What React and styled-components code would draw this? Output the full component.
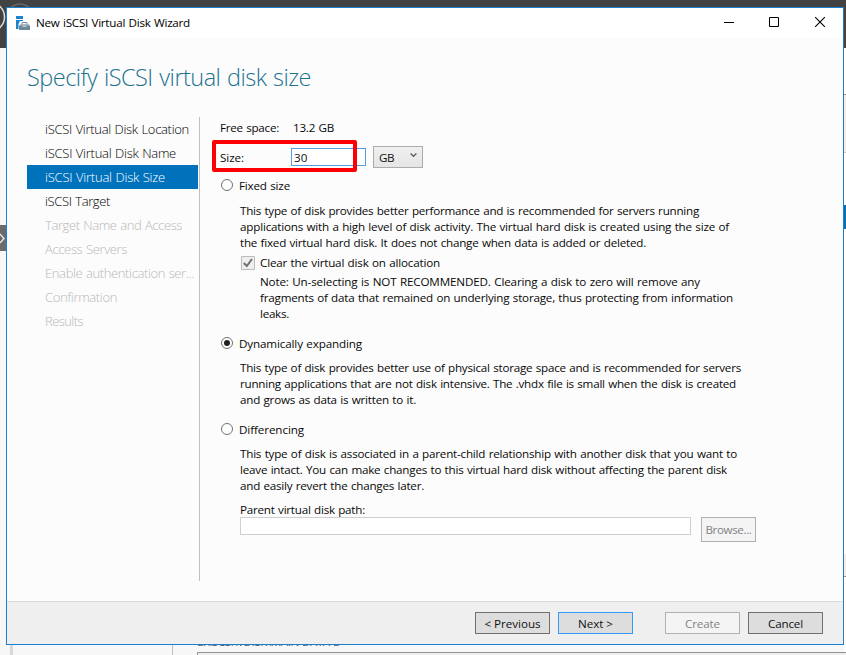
import React, { useLayoutEffect, useRef } from "react";
import styled, { createGlobalStyle, css } from "styled-components";

const GlobalStyle = createGlobalStyle`
  *, *::before, *::after { box-sizing: border-box; }
  html, body { margin: 0; padding: 0; overflow: hidden; }
  button, input { font: inherit; margin: 0; padding: 0; border-radius: 0; outline: 0; }
`;

const Desktop = styled.div`
  position: relative;
  width: 846px;
  height: 655px;
  overflow: hidden;
  background: #f7f7f7;
  font: 11.65px/16px "Open Sans", "Noto Sans", sans-serif;
  word-spacing: 0.6px;
  color: #080808;
`;

const ServerBar = styled.div`
  height: 48px;
  background: #424242;
`;

const Backdrop = styled.svg`
  position: absolute;
  inset: 0;
  display: block;
`;

const HiddenCaption = styled.div`
  position: absolute;
  left: 197px;
  top: 634px;
  color: #4d5c7d;
  white-space: pre;
`;

const Window = styled.section`
  position: absolute;
  left: 6px;
  top: 7px;
  width: 838px;
  height: 638px;
  display: flex;
  flex-direction: column;
  border: 1px solid #1a80cc;
  background: #fcfcfc;
`;

const TitleBar = styled.header`
  display: flex;
  align-items: center;
  height: 30px;
  padding: 0 18px 0 9px;
  background: #fff;
  color: #000;
`;

const AppIcon = styled.svg`
  width: 14px;
  height: 14px;
  margin-right: 6px;
`;

const Controls = styled.div`
  display: flex;
  gap: 35px;
  margin: 0 0 2px auto;
`;

const ControlIcon = styled.svg`
  width: ${(p) => p.$width || 10}px;
  height: 10px;
  fill: none;
  stroke: #000;
`;

const Heading = styled.h1`
  height: 79px;
  margin: 0;
  padding: 23px 0 0 20px;
  font-size: 23.5px;
  line-height: 32px;
  font-weight: 300;
  word-spacing: 1px;
  color: #1d7291;
`;

const Body = styled.div`
  display: flex;
  height: 464px;
  margin-bottom: 20px;
`;

const Steps = styled.nav`
  width: 193px;
  padding-left: 20px;
  border-right: 1px solid #c0c0c0;
`;

const stepColors = { active: "#fff", disabled: "#b8b8b8", normal: "#000" };

const Step = styled.div`
  width: 171px;
  height: 24px;
  padding-left: 18px;
  font-size: 13px;
  line-height: 24px;
  font-weight: 300;
  color: ${(p) => stepColors[p.$state || "normal"]};
  background: ${(p) => (p.$state === "active" ? "#0072bc" : "transparent")};
`;

const Form = styled.main`
  width: 560px;
  padding: 3px 0 0 20px;
`;

const Field = styled.div`
  display: flex;
  align-items: center;
  height: ${(p) => p.$height}px;
  position: relative;
`;

const FieldName = styled.span`
  width: 73px;
  padding-top: ${(p) => p.$drop || 0}px;
`;

const SizeInput = styled.input`
  width: 75px;
  height: 18px;
  margin-left: -2px;
  padding: 1px 0 0 2px;
  border: 1px solid #569de5;
  background: #fff;
  color: #111;
`;

const Highlight = styled.div`
  position: absolute;
  left: -8px;
  top: 4px;
  width: 145px;
  height: 32px;
  border: 4px solid #fd0006;
  border-radius: 2px;
  pointer-events: none;
`;

const Combo = styled.button`
  display: flex;
  align-items: center;
  justify-content: space-between;
  width: 50px;
  height: 22px;
  margin-left: 7px;
  padding: 2px 5px 0 5px;
  border: 1px solid #acacac;
  background: linear-gradient(#f0f0f0, #e5e5e5);
  color: #111;
`;

const ComboArrow = styled.svg`
  width: 7px;
  height: 5px;
  margin-bottom: 4px;
`;

const Option = styled.div`
  display: flex;
  align-items: flex-start;
  height: 16px;
  padding: 1px 0 0 1px;
  gap: 6px;
`;

const Radio = styled.span`
  display: flex;
  align-items: center;
  justify-content: center;
  width: 12px;
  height: 12px;
  margin-top: 1px;
  border: 1px solid #707070;
  border-radius: 50%;
  background: #fff;
  ${(p) =>
    p.$checked &&
    css`
      &::after {
        content: "";
        width: 6px;
        height: 6px;
        border-radius: 50%;
        background: #212121;
      }
    `}
`;

const Paragraph = styled.div`
  padding-left: ${(p) => (p.$nested ? 40 : 20)}px;
  margin: ${(p) => p.$margin};
`;

const CheckRow = styled.div`
  display: flex;
  align-items: center;
  gap: 5px;
  height: 16px;
  padding-left: 21px;
`;

const CheckBox = styled.svg`
  width: 14px;
  height: 14px;
`;

const PathRow = styled.div`
  display: flex;
  align-items: flex-start;
  gap: 10px;
  padding-left: 20px;
`;

const PathInput = styled.input`
  width: 451px;
  height: 18px;
  border: 1px solid #cfcfcf;
  background: #fff;
`;

const Footer = styled.footer`
  display: flex;
  gap: 8px;
  justify-content: flex-end;
  flex: 1;
  padding: 10px 20px 0 0;
  border-top: 1px solid #d9d9d9;
  background: #efefef;
`;

const buttonLooks = {
  normal: css`
    border-color: #707070;
    background: #dddddd;
    color: #111;
  `,
  primary: css`
    border-color: #3399ff;
    background: #dddddd;
    color: #111;
  `,
  disabled: css`
    border-color: #adb2b5;
    background: #f4f4f4;
    color: #838383;
  `,
};

const Button = styled.button`
  display: flex;
  align-items: center;
  justify-content: center;
  width: ${(p) => p.$width || 75}px;
  height: ${(p) => p.$height || 22}px;
  margin-left: ${(p) => p.$offset || 0}px;
  padding-top: ${(p) => (p.$height ? 0 : 2)}px;
  border: 1px solid;
  ${(p) => buttonLooks[p.$look || "normal"]}
`;

const TextLine = styled.span`
  display: table;
  white-space: pre;
`;

// Tracks a single line of text so that it fills the given width.
function Line({ width, children }) {
  const ref = useRef(null);
  useLayoutEffect(() => {
    const el = ref.current;
    el.style.letterSpacing = "0px";
    const natural = el.getBoundingClientRect().width;
    el.style.letterSpacing = `${(width - natural) / children.length}px`;
  }, [width, children]);
  return <TextLine ref={ref}>{children}</TextLine>;
}

const steps = [
  ["iSCSI Virtual Disk Location", 144],
  ["iSCSI Virtual Disk Name", 131],
  ["iSCSI Virtual Disk Size", 120, "active"],
  ["iSCSI Target", 65],
  ["Target Name and Access", 137, "disabled"],
  ["Access Servers", 82, "disabled"],
  ["Enable authentication ser...", 149, "disabled"],
  ["Confirmation", 72, "disabled"],
  ["Results", 38, "disabled"],
];

const fixedText = [
  ["This type of disk provides better performance and is recommended for servers running", 459],
  ["applications with a high level of disk activity. The virtual hard disk is created using the size of", 489],
  ["the fixed virtual hard disk. It does not change when data is added or deleted.", 406],
];
const noteText = [
  ["Note: Un-selecting is NOT RECOMMENDED. Clearing a disk to zero will remove any", 440],
  ["fragments of data that remained on underlying storage, thus protecting from information", 473],
  ["leaks.", 29],
];
const dynamicText = [
  ["This type of disk provides better use of physical storage space and is recommended for servers", 501],
  ["running applications that are not disk intensive. The .vhdx file is small when the disk is created", 496],
  ["and grows as data is written to it.", 176],
];
const differencingText = [
  ["This type of disk is associated in a parent-child relationship with another disk that you want to", 497],
  ["leave intact. You can make changes to this virtual hard disk without affecting the parent disk", 487],
  ["and easily revert the changes later.", 184],
];

const Lines = ({ items }) => items.map(([text, width]) => <Line key={text} width={width}>{text}</Line>);

export default function App() {
  return (
    <Desktop>
      <GlobalStyle />
      <ServerBar />
      <Backdrop width="846" height="655" viewBox="0 0 846 655">
        <circle cx="-10" cy="17" r="14.5" fill="none" stroke="#ddd" strokeWidth="1.5" />
        <circle cx="20" cy="17" r="13" fill="none" stroke="#666" strokeWidth="1.5" />
        <path d="M0 225h6v26H0z" fill="#6b6b6b" />
        <path d="M0 234l4 4.5-4 4.5" fill="none" stroke="#eee" strokeWidth="1.3" />
        <path d="M844 48h2v607h-2z" fill="#fff" />
        <path d="M844 95h2v57h-2z" fill="#eee" />
        <path d="M844 94h2v1h-2zM844 576h2v1h-2z" fill="#8c8c8c" />
        <path d="M844 152h2v1h-2z" fill="#c8c8c8" />
        <path d="M844 205h2v24h-2z" fill="#0072bc" />
        <path d="M844 554h2v22h-2z" fill="#eee" />
        <path d="M10 645h3v10h-3z" fill="#d8d8d8" />
        <path d="M172 645h1v10h-1z" fill="#c0c0c0" />
        <path d="M197 652h649v3H197z" fill="#eee" />
        <path d="M197.500 655v-2.500H846" fill="none" stroke="#929292" />
      </Backdrop>
      <HiddenCaption>
        <Line width={144}>E:\iSCSI\VDISK\MAIN-DATA-D</Line>
      </HiddenCaption>
      <Window>
        <TitleBar>
          <AppIcon viewBox="0 0 14 14">
            <path d="M0 0h7v3H0zM0 4h7v1H4L2.500 8v5H0z" fill="#1684cf" />
            <path d="M6 8V6.500h5V8" fill="none" stroke="#7891a1" />
            <path d="M4.500 8h8L14 10H3z" fill="#a9b8c2" />
            <path d="M3 9.500h3.500v1h4v-1H14V14H3z" fill="#6f8898" />
          </AppIcon>
          <Line width={154}>New iSCSI Virtual Disk Wizard</Line>
          <Controls>
            <ControlIcon viewBox="0 0 10 10"><path d="M0 5.500h10" /></ControlIcon>
            <ControlIcon $width={11} viewBox="0 0 11 10"><path d="M.5.500h9v9h-9z" /></ControlIcon>
            <ControlIcon viewBox="0 0 10 10"><path d="M0 0l10 10m0-10L0 10" strokeWidth="1.1" /></ControlIcon>
          </Controls>
        </TitleBar>
        <Heading><Line width={284}>Specify iSCSI virtual disk size</Line></Heading>
        <Body>
          <Steps>
            {steps.map(([text, width, state]) => (
              <Step key={text} $state={state}><Line width={width}>{text}</Line></Step>
            ))}
          </Steps>
          <Form>
            <Field $height={16}>
              <FieldName><Line width={59}>Free space:</Line></FieldName>
              <Line width={41}>13.2 GB</Line>
            </Field>
            <Field $height={41}>
              <FieldName $drop={2}><Line width={24}>Size:</Line></FieldName>
              <SizeInput defaultValue="30" />
              <Highlight />
              <Combo>
                <Line width={15}>GB</Line>
                <ComboArrow viewBox="0 0 7 5"><path d="M.6.600l2.900 2.700L6.400.6" fill="none" stroke="#606060" strokeWidth="1.4" /></ComboArrow>
              </Combo>
            </Field>
            <Option><Radio /><Line width={51}>Fixed size</Line></Option>
            <Paragraph $margin="10px 0 4px"><Lines items={fixedText} /></Paragraph>
            <CheckRow>
              <CheckBox viewBox="0 0 14 14">
                <path d="M.5.500h13v13H.5z" fill="#efefef" stroke="#bcbcbc" />
                <path d="M2.800 7l3 3 5.200-7" fill="none" stroke="#707070" strokeWidth="2" />
              </CheckBox>
              <Line width={180}>Clear the virtual disk on allocation</Line>
            </CheckRow>
            <Paragraph $nested $margin="3px 0 13px"><Lines items={noteText} /></Paragraph>
            <Option><Radio $checked /><Line width={123}>Dynamically expanding</Line></Option>
            <Paragraph $margin="9px 0 13px"><Lines items={dynamicText} /></Paragraph>
            <Option><Radio /><Line width={65}>Differencing</Line></Option>
            <Paragraph $margin="9px 0 8px"><Lines items={differencingText} /></Paragraph>
            <Paragraph $margin="0 0 -1px"><Line width={125}>Parent virtual disk path:</Line></Paragraph>
            <PathRow>
              <PathInput disabled />
              <Button disabled $look="disabled" $width={55} $height={25}><Line width={46}>Browse...</Line></Button>
            </PathRow>
          </Form>
        </Body>
        <Footer>
          <Button><Line width={56}>&lt; Previous</Line></Button>
          <Button $look="primary"><Line width={35}>Next &gt;</Line></Button>
          <Button disabled $look="disabled" $offset={24}><Line width={35}>Create</Line></Button>
          <Button><Line width={35}>Cancel</Line></Button>
        </Footer>
      </Window>
    </Desktop>
  );
}
